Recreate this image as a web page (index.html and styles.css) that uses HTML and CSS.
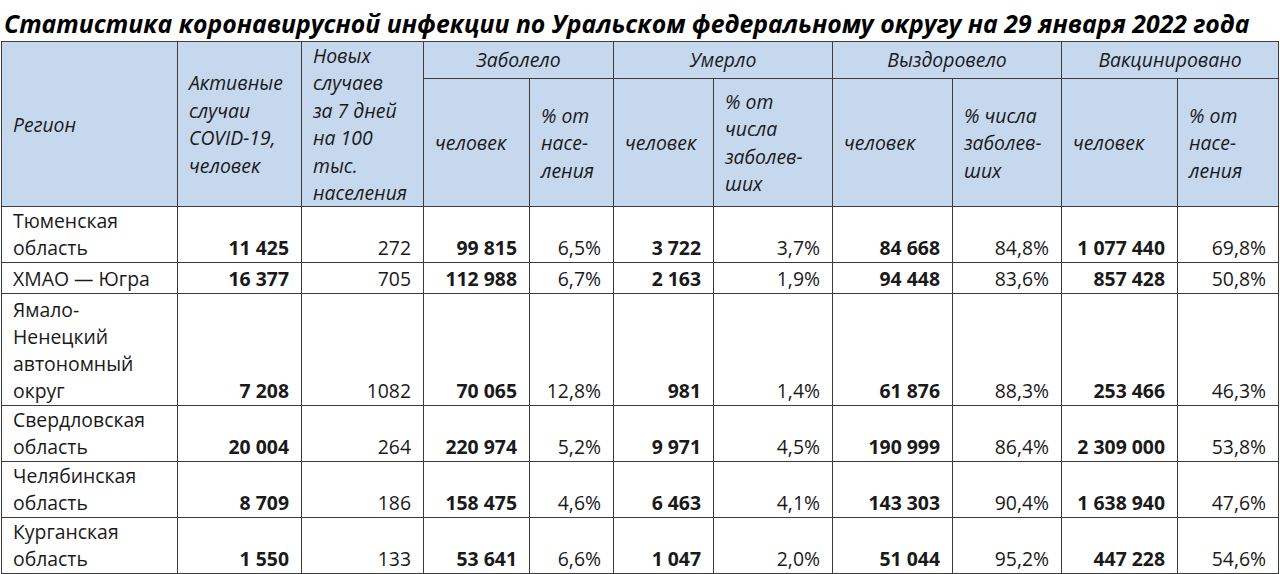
FILE: index.html
```html
<!DOCTYPE html>
<html lang="ru">
<head>
<meta charset="utf-8">
<title>Статистика коронавирусной инфекции</title>
<link rel="stylesheet" href="styles.css">
</head>
<body>
<h1 class="title">Статистика коронавирусной инфекции по Уральском федеральному округу на 29 января 2022 года</h1>
<table class="stats">
  <colgroup>
    <col class="c-region">
    <col class="c-active">
    <col class="c-new">
    <col class="c-z1">
    <col class="c-z2">
    <col class="c-u1">
    <col class="c-u2">
    <col class="c-v1">
    <col class="c-v2">
    <col class="c-k1">
    <col class="c-k2">
  </colgroup>
  <thead>
    <tr class="h1">
      <th rowspan="2" class="hl">Регион</th>
      <th rowspan="2" class="hl">Активные<br>случаи<br>COVID-19,<br>человек</th>
      <th rowspan="2" class="hl">Новых<br>случаев<br>за 7 дней<br>на 100<br>тыс.<br>населения</th>
      <th colspan="2" class="hc">Заболело</th>
      <th colspan="2" class="hc">Умерло</th>
      <th colspan="2" class="hc">Выздоровело</th>
      <th colspan="2" class="hc">Вакцинировано</th>
    </tr>
    <tr class="h2">
      <th class="hl">человек</th>
      <th class="hl">% от<br>насе-<br>ления</th>
      <th class="hl">человек</th>
      <th class="hl">% от<br>числа<br>заболев-<br>ших</th>
      <th class="hl">человек</th>
      <th class="hl">% числа<br>заболев-<br>ших</th>
      <th class="hl">человек</th>
      <th class="hl">% от<br>насе-<br>ления</th>
    </tr>
  </thead>
  <tbody>
    <tr class="r2">
      <td class="name">Тюменская<br>область</td>
      <td class="b">11 425</td><td>272</td>
      <td class="b">99 815</td><td>6,5%</td>
      <td class="b">3 722</td><td>3,7%</td>
      <td class="b">84 668</td><td>84,8%</td>
      <td class="b">1 077 440</td><td>69,8%</td>
    </tr>
    <tr class="r1">
      <td class="name">ХМАО — Югра</td>
      <td class="b">16 377</td><td>705</td>
      <td class="b">112 988</td><td>6,7%</td>
      <td class="b">2 163</td><td>1,9%</td>
      <td class="b">94 448</td><td>83,6%</td>
      <td class="b">857 428</td><td>50,8%</td>
    </tr>
    <tr class="r4">
      <td class="name">Ямало-<br>Ненецкий<br>автономный<br>округ</td>
      <td class="b">7 208</td><td>1082</td>
      <td class="b">70 065</td><td>12,8%</td>
      <td class="b">981</td><td>1,4%</td>
      <td class="b">61 876</td><td>88,3%</td>
      <td class="b">253 466</td><td>46,3%</td>
    </tr>
    <tr class="r2b">
      <td class="name">Свердловская<br>область</td>
      <td class="b">20 004</td><td>264</td>
      <td class="b">220 974</td><td>5,2%</td>
      <td class="b">9 971</td><td>4,5%</td>
      <td class="b">190 999</td><td>86,4%</td>
      <td class="b">2 309 000</td><td>53,8%</td>
    </tr>
    <tr class="r2c">
      <td class="name">Челябинская<br>область</td>
      <td class="b">8 709</td><td>186</td>
      <td class="b">158 475</td><td>4,6%</td>
      <td class="b">6 463</td><td>4,1%</td>
      <td class="b">143 303</td><td>90,4%</td>
      <td class="b">1 638 940</td><td>47,6%</td>
    </tr>
    <tr class="r2c">
      <td class="name">Курганская<br>область</td>
      <td class="b">1 550</td><td>133</td>
      <td class="b">53 641</td><td>6,6%</td>
      <td class="b">1 047</td><td>2,0%</td>
      <td class="b">51 044</td><td>95,2%</td>
      <td class="b">447 228</td><td>54,6%</td>
    </tr>
  </tbody>
</table>
</body>
</html>
```

FILE: styles.css
```css
html, body {
  margin: 0;
  padding: 0;
  background: #ffffff;
}

body {
  font-family: "Open Sans", "Noto Sans", sans-serif;
  color: #1a1a1a;
  width: 1280px;
}

.title {
  margin: 0;
  padding: 6px 0 0 4px;
  height: 35px;
  font-size: 24.8px;
  line-height: 34px;
  font-weight: 700;
  font-style: italic;
  color: #000;
  white-space: nowrap;
}

.stats {
  border-collapse: collapse;
  table-layout: fixed;
  width: 1277px;
  margin-left: 1px;
  font-size: 19.4px;
  line-height: 27px;
}

.c-region { width: 176px; }
.c-active { width: 124px; }
.c-new { width: 122px; }
.c-z1 { width: 106px; }
.c-z2 { width: 84px; }
.c-u1 { width: 100px; }
.c-u2 { width: 119px; }
.c-v1 { width: 120px; }
.c-v2 { width: 109px; }
.c-k1 { width: 116px; }
.c-k2 { width: 101px; }

.stats th,
.stats td {
  border: 1px solid #3c3c3c;
  padding: 0;
  overflow: hidden;
  white-space: nowrap;
}

.stats th {
  background: #c6d8ee;
  font-weight: 400;
  font-style: italic;
  vertical-align: middle;
  line-height: 27.4px;
}

.stats th.hl {
  text-align: left;
  padding-left: 11px;
}

.stats th.hc {
  text-align: center;
}

.h1 { height: 37px; }
.h2 { height: 127px; }

.stats td {
  text-align: right;
  vertical-align: bottom;
  padding-right: 12px;
  padding-bottom: 1px;
}

.stats td.name {
  text-align: left;
  padding-left: 11px;
  padding-right: 0;
}

.stats td.b {
  font-weight: 700;
}

.r2 { height: 55px; }
.r1 { height: 31px; }
.r4 { height: 112px; }
.r2b { height: 56px; }
.r2c { height: 54px; }
```
